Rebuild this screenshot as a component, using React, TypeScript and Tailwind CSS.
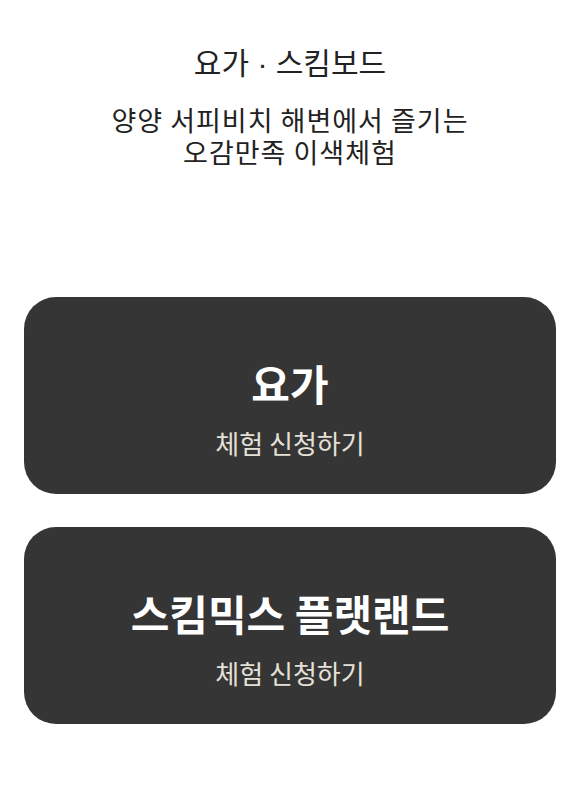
import React from 'react';

const programs = [
  { id: 'yoga', title: '요가' },
  { id: 'skim', title: '스킴믹스 플랫랜드' },
];

export default function App() {
  return (
    <div
      className="min-h-screen bg-white flex flex-col items-center"
      style={{ fontFamily: '"Noto Sans CJK KR", "Noto Sans", sans-serif' }}
    >
      <h1 className="mt-[39px] h-[44px] text-[30px] leading-[44px] text-[#222]">
        요가<span className="font-['Liberation_Sans',sans-serif] leading-none"> · </span>스킴보드
      </h1>
      <div className="mt-[20px] text-[27px] tracking-[1px] text-[#222] text-center flex flex-col">
        <span className="block leading-[33px] h-[32px]">양양 서피비치 해변에서 즐기는</span>
        <span className="block leading-[33px] h-[33px]">오감만족 이색체험</span>
      </div>

      <div className="w-full px-6 mt-[129px] flex flex-col gap-[33px]">
        {programs.map(p => (
          <button
            key={p.id}
            className="h-[197px] w-full rounded-[32px] bg-[#353535] flex flex-col items-center pt-[62px]"
          >
            <span className="text-[42px] font-bold leading-[48px] text-white">{p.title}</span>
            <span className="mt-[20px] text-[26px] leading-[32px] text-[#e6e1d8]">체험 신청하기</span>
          </button>
        ))}
      </div>
    </div>
  );
}
